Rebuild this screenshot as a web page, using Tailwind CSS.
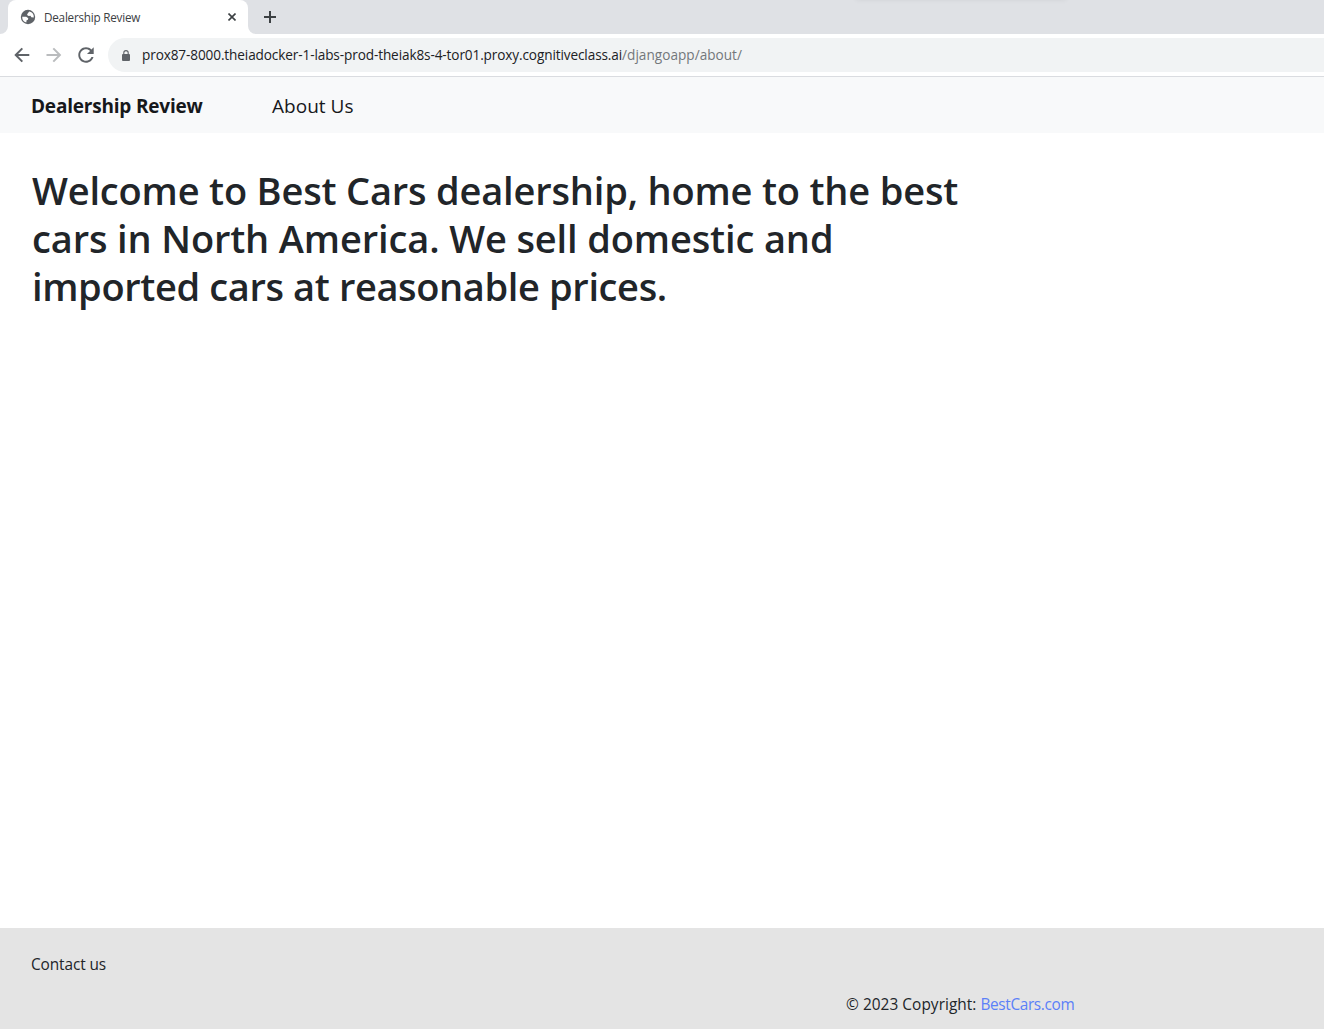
<!DOCTYPE html>
<html lang="en">
<head>
<meta charset="utf-8">
<title>Dealership Review</title>
<script src="https://cdn.jsdelivr.net/npm/@tailwindcss/browser@4"></script>
</head>
<body class="h-screen overflow-hidden bg-white font-['Open_Sans','Noto_Sans',sans-serif] text-[#212529]">
<div class="flex h-full flex-col">
  <!-- Tab strip -->
  <div class="relative flex h-[34px] shrink-0 items-end overflow-hidden bg-[#dfe1e5]">
    <div class="absolute left-[856px] top-[-4px] h-1 w-[210px] shadow-[0_0_5px_rgba(0,0,0,0.07)]"></div>
    <svg class="h-2 w-2 shrink-0" viewBox="0 0 8 8"><path d="M8 0v8H0a8 8 0 0 0 8-8z" fill="#fff"/></svg>
    <div class="flex h-[34px] w-60 items-center rounded-t-lg bg-white pl-3">
      <svg class="h-4 w-4 shrink-0" viewBox="0 0 16 16"><circle cx="8" cy="8" r="7.200" fill="#5f6368"/><path d="M9.300 2.500L7.800 4.200 7 5.900 8.700 6.900 10.500 6.700 11.300 8.200 13.800 8.500A5.900 5.900 0 0 0 9.300 2.500z M2.200 7.700L6.200 7.700 8.300 9.300 7.900 10.700 6.600 11.300 6.300 13.500A5.900 5.900 0 0 1 2.200 7.700z" fill="#fff"/></svg>
      <span class="ml-2 whitespace-nowrap pb-px text-[11.700px] leading-4 tracking-[-0.22px] text-[#3c4043]">Dealership Review</span>
      <svg class="ml-auto mr-3 h-2 w-2" viewBox="0 0 8 8" stroke="#3c4043" stroke-width="1.6"><path d="M.5.5l7 7M7.500.5l-7 7"/></svg>
    </div>
    <svg class="h-2 w-2 shrink-0" viewBox="0 0 8 8"><path d="M0 0v8h8a8 8 0 0 1-8-8z" fill="#fff"/></svg>
    <svg class="mb-[11px] ml-2 h-3 w-3" viewBox="0 0 12 12" stroke="#3c4043" stroke-width="2"><path d="M6 0v12M0 6h12"/></svg>
  </div>
  <!-- Toolbar -->
  <div class="flex h-[43px] shrink-0 items-center border-b border-[#dadce0] bg-white pl-[14px]">
    <svg class="h-4 w-4" viewBox="3.700 4 16 16" fill="#5f6368"><path d="M19 11H7.830l4.880-4.880L11.300 4.700l-7.300 7.300 7.300 7.300 1.410-1.410L7.830 13H19v-2z"/></svg>
    <svg class="ml-4 h-4 w-4" viewBox="4 4 16 16" fill="#babcbe"><path d="M12 4.700l-1.410 1.410L15.470 11H4.500v2h10.970l-4.880 4.890L12 19.300l7.300-7.300z"/></svg>
    <svg class="ml-4 h-4 w-4" viewBox="3.700 3.700 16.600 16.600" fill="#5f6368"><path d="M17.650 6.350C16.200 4.900 14.210 4 12 4c-4.420 0-7.990 3.580-7.990 8s3.570 8 7.990 8c3.730 0 6.840-2.550 7.730-6h-2.080c-.82 2.330-3.040 4-5.650 4-3.310 0-6-2.690-6-6s2.690-6 6-6c1.660 0 3.140.69 4.220 1.780L13 11h7V4l-2.350 2.350z"/></svg>
    <div class="ml-[14px] flex h-[34px] flex-1 items-center rounded-l-full bg-[#f1f3f4] pl-[14px]">
      <svg class="h-[11px] w-2" viewBox="0 0 8 11"><rect y="4" width="8" height="7" rx="1" fill="#5f6368"/><path d="M1.800 4.500V2.800a2.200 2.200 0 0 1 4.400 0v1.700" fill="none" stroke="#5f6368" stroke-width="1.100"/></svg>
      <span class="ml-3 whitespace-nowrap text-[13.600px] leading-5 tracking-[-0.115px] text-[#202124]">prox87-8000.theiadocker-1-labs-prod-theiak8s-4-tor01.proxy.cognitiveclass.ai<span class="tracking-[0.02px] text-[#73777b]">/djangoapp/about/</span></span>
    </div>
  </div>
  <!-- Site navigation -->
  <nav class="flex h-14 shrink-0 items-center bg-[#f8f9fa] pl-[31px] pt-0.5 text-[19px] leading-[30px] text-[#16181b]">
    <a class="w-[241px] whitespace-nowrap font-bold tracking-[-0.2px]">Dealership Review</a>
    <a class="whitespace-nowrap tracking-[0.020px]">About Us</a>
  </nav>
  <main class="flex-1 pl-8 pt-[33px]">
    <h1 class="whitespace-nowrap text-[38px] font-semibold leading-[48px]"><span class="tracking-[-0.18px]">Welcome to Best Cars dealership, home to the best</span><br><span class="tracking-[-0.13px]">cars in North America. We sell domestic and</span><br><span class="tracking-[-0.37px]">imported cars at reasonable prices.</span></h1>
  </main>
  <footer class="h-[101px] shrink-0 bg-[#e4e4e4] pl-[31px] pt-[25px] text-[15.400px] leading-6">
    <div class="tracking-[-0.1px]">Contact us</div>
    <div class="mt-4 flex gap-1 whitespace-nowrap pl-[815px]"><span class="tracking-[0.050px]">© 2023 Copyright:</span><a class="tracking-[-0.36px] text-[#5b80f8]">BestCars.com</a></div>
  </footer>
</div>
</body>
</html>
